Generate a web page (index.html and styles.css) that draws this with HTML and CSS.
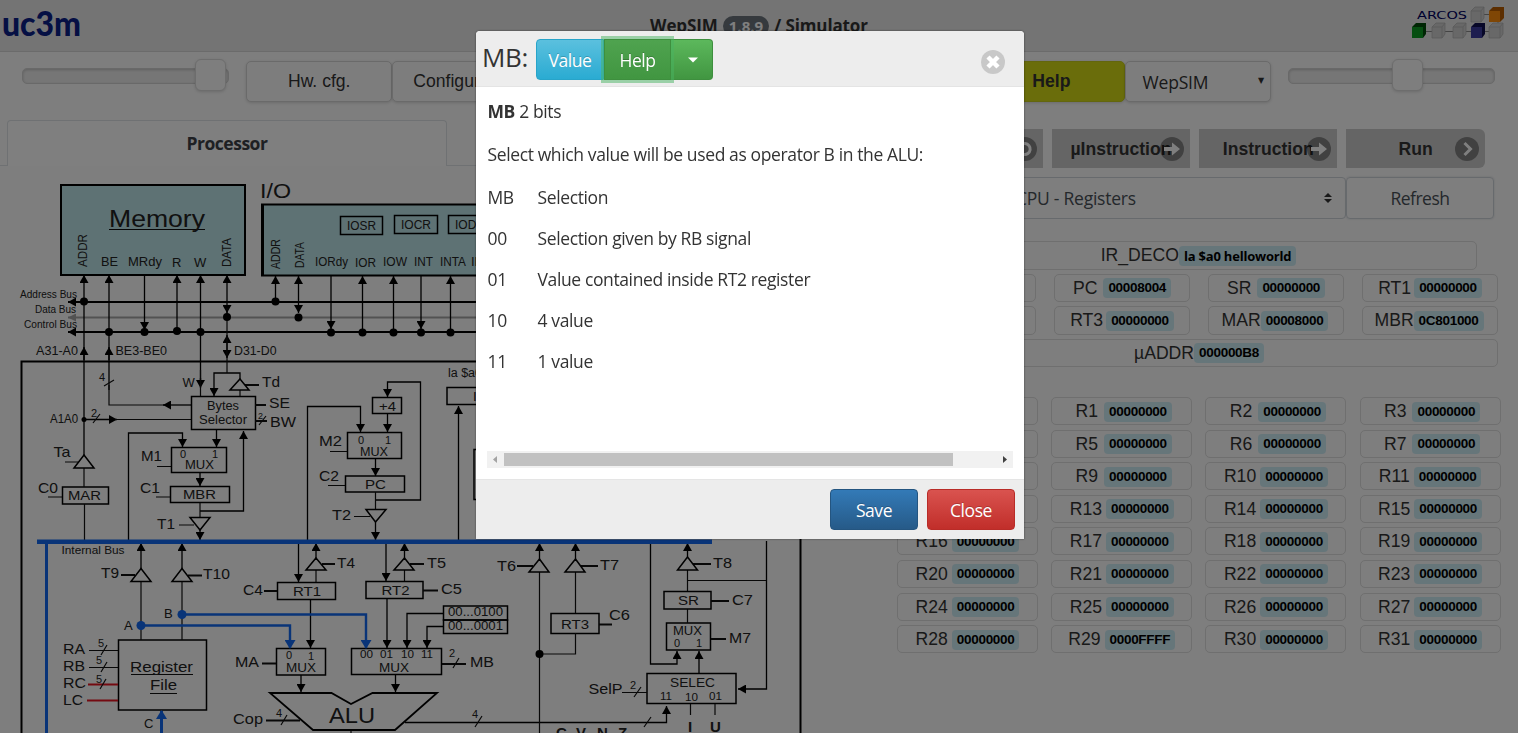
FILE: index.html
```html
<!DOCTYPE html>
<html lang="en">
<head>
<meta charset="utf-8">
<title>WepSIM</title>
<link rel="stylesheet" href="styles.css">
</head>
<body>
<header class="topbar">
  <svg class="uc3m" width="90" height="36" viewBox="0 0 90 36"><text x="2" y="26" textLength="79" lengthAdjust="spacingAndGlyphs">uc3m</text></svg>
  <div class="brand">WepSIM <span class="version">1.8.9</span> / Simulator</div>
  <svg class="arcos" width="96" height="34" viewBox="1410 6 96 34">
    <path class="link" d="M1483 14.500h8M1424 31.500h66M1498 21v5"/>
    <text x="1417" y="18.500" textLength="50" lengthAdjust="spacingAndGlyphs">ARCOS</text>
    <g fill="#d0d0d0" stroke="#b4b4b4" stroke-width=".8">
      <path d="M1471 11l4-4h9v11l-3 4h-10zM1471 11h10v11M1481 11l3-4"/>
      <path d="M1432 27l4-4h9v11l-3 4h-10zM1432 27h10v11M1442 27l3-4"/>
      <path d="M1453 27l4-4h9v11l-3 4h-10zM1453 27h10v11M1463 27l3-4"/>
      <path d="M1489 27l4-4h10v11l-3 4h-11zM1489 27h11v11M1500 27l3-4"/>
    </g>
    <path fill="#b85c00" d="M1489 11l4-4h11v11l-4 4h-11z"/><path fill="#ff8c0a" d="M1489 11h11v11h-11z"/>
    <path fill="#004c08" d="M1412 27l4-4h10v11l-3 4h-11z"/><path fill="#0c9c22" d="M1412 27h11v11h-11z"/>
    <path fill="#101050" d="M1471 27l4-4h10v11l-3 4h-11z"/><path fill="#3c3ca0" d="M1471 27h11v11h-11z"/>
  </svg>
</header>

<div class="toolbar">
  <div class="slider"><i class="knob knob-end"></i></div>
  <div class="tools">
    <button class="tool">Hw. cfg.</button>
    <button class="tool">Configuration</button>
    <button class="tool tool-help">Help</button>
    <button class="tool tool-mode">WepSIM<span>▼</span></button>
  </div>
  <div class="slider"><i class="knob knob-mid"></i></div>
</div>

<main class="work">
  <section class="left">
    <div class="tabs"><div class="tab">Processor</div></div>
    <svg class="cpu" width="880" height="567" viewBox="0 166 880 567">
      <defs>
        <marker id="a" markerUnits="userSpaceOnUse" markerWidth="8" markerHeight="9" refX="8" refY="4.500" orient="auto-start-reverse"><path d="M0 0L8 4.500L0 9z"/></marker>
        <marker id="b" markerUnits="userSpaceOnUse" markerWidth="9" markerHeight="11" refX="8" refY="5.500" orient="auto"><path class="bluefill" d="M0 0L9 5.500L0 11z"/></marker>
        <marker id="g" markerUnits="userSpaceOnUse" markerWidth="8" markerHeight="8" refX="8" refY="4" orient="auto"><path fill="#a4a4a4" d="M0 0L8 4L0 8z"/></marker>
      </defs>
      <rect class="chip" x="61" y="185" width="184" height="90"/>
      <rect class="chip" x="262" y="204.500" width="460" height="71"/>
      <path class="heavy" d="M262.500 204v72"/>
      <g class="frames">
        <rect x="340.500" y="216.500" width="42" height="18"/><rect x="394.500" y="215.500" width="43" height="18"/><rect x="448.500" y="215.500" width="43" height="18"/>
        <rect x="191.500" y="396.500" width="64" height="33"/>
        <rect x="62.500" y="487" width="46" height="17"/>
        <rect x="171.500" y="447.500" width="55" height="25"/><rect x="170.500" y="486.500" width="59" height="16"/>
        <rect x="372.500" y="397.500" width="29" height="16"/><rect x="347.500" y="432.500" width="54" height="26"/><rect x="345.500" y="476" width="59" height="16"/>
        <rect x="447" y="387.500" width="60" height="17"/><rect x="474" y="449.500" width="60" height="50"/>
        <rect x="118.500" y="640" width="88" height="70"/>
        <rect x="277.500" y="582.500" width="58" height="17"/><rect x="366" y="581.500" width="57" height="17"/>
        <rect x="443.500" y="606" width="64" height="14"/><rect x="443.500" y="620" width="64" height="13.500"/>
        <rect x="276.500" y="648.500" width="49" height="26.500"/><rect x="351.500" y="648.500" width="90" height="26"/>
        <rect x="551" y="613.500" width="48" height="20"/>
        <rect x="664" y="591.500" width="47" height="17.500"/><rect x="666.500" y="623" width="44" height="27"/><rect x="647" y="673.500" width="89" height="30"/>
      </g>
      <path class="bus" d="M800.500 733V361.500H21.500V733"/>
      <path class="bus" marker-end="url(#a)" d="M700 302H68"/>
      <path class="bus greybus" marker-end="url(#g)" d="M700 317.500H68"/>
      <path class="bus" marker-end="url(#a)" d="M700 332H68"/>
      <g class="arr">
        <path d="M84 455V275"/><path d="M84 360V347"/><path d="M109 360V347"/><path d="M109 390V275"/>
        <path d="M144.500 275V330"/><path d="M177 332V275"/><path d="M200.500 380V275"/><path d="M200.500 378V388"/>
        <path class="both" d="M227 275V313"/><path class="both" d="M227 335V358"/>
        <path d="M275.500 302V276"/><path class="both" d="M298.500 276V313"/>
        <path d="M331 276V329"/><path d="M362.500 332V276"/><path d="M393.500 332V276"/><path d="M421 276V329"/><path d="M450.500 332V276"/>
        <path d="M191 405H163"/><path d="M84 419.500H117"/>
        <path d="M240 379V373H214V396"/><path d="M128.500 541V433H182.500V447"/><path d="M216.500 430V447"/><path d="M200 473V486"/><path d="M200 530V540"/>
        <path d="M200 511H243.500V431"/>
        <path d="M375.500 500H420.500V382H387.500V397"/><path d="M387.500 414V432"/><path d="M307.500 541V406.500H360.500V432"/><path d="M375.500 459V476"/><path d="M375.500 522V540"/>
        <path d="M458.500 541V406"/>
        <path d="M141 569V543"/><path d="M182 569V543"/><path d="M316 558V543"/><path d="M404.500 558V543"/><path d="M539.500 559V543"/><path d="M575.500 559V543"/><path d="M687.500 557V543"/>
        <path d="M298.500 541V582"/><path d="M310.500 600V648"/><path d="M386 541V581"/><path d="M387 599V648"/>
        <path d="M443 613.500H407V648"/><path d="M443 626.500H427V648"/><path d="M301 675V692"/><path d="M395.500 675V692"/>
        <path d="M405 722.500H666.500V706"/><path d="M650.500 541V664H677V651"/><path d="M699 673V651"/><path d="M766.500 541V689H738"/>
      </g>
      <path class="wire" d="M109 385V405H165M115 419.500H191M200.500 370V396M227 308V373M240 390V396M84 468V487M84.500 504V541M200 503V517M375.500 492V509M65 462H78M48 497H62M157 466.500H171M156 497H170M179 525H194M330 451.500H347M328 485.500H345M354 516.500H370M141 582V640M182 582V640M316 570V582M404.500 570V581M539.500 572V733M575.500 572V613M575.500 633V654H539M687.500 570V591M687 580.500H766M687.500 609V623M690.500 704V715M715 704V715M622 692.500H647M89 650.500H118M89 667.500H118M351 730V733"/>
      <path class="wire thick" d="M245 385H259M255 405H266M255 421H267M121 575H135M188 575.500H202M264 591H277M322 564H335M410 564H424M423 590.500H438M262 663.500H276M442 664H466M266 720.500H300M517 566H533M581 566H598M599 624.500H612M693 564H711M711 601H729M711 639H726"/>
      <path class="wire" d="M104 386L114 380M93 423L100 414M259 425L266 416M101 655L107 645M101 672L107 662M453 668L459 658M281 725L287 715M475 727L482 716M644 727L651 717M634 697L641 687"/>
      <path class="gate" d="M84 455L94 468H74zM240 379L249 390H230zM190 517.500H210L200 530zM366 509.500H386L375.500 522zM141 568.500L151 581.500H131zM182 568.500L192 581.500H172zM316 558L326 570H306zM404.500 558L414 570H394zM539.500 559L549 572H529zM575.500 559L585 572H565zM687.500 557L697.500 570H677.500z"/>
      <path class="gate alu" d="M270 693H331.500L351 704L372.500 693H437L395 730H313z"/>
      <path class="redwire" d="M88 684.500H118M87 700.500H118"/><path class="wire" d="M100 689L106 679"/>
      <path class="bluebus" d="M37 541.800H712"/>
      <path class="bluewire" d="M46.500 543V733"/>
      <path class="bluewire slim" marker-end="url(#b)" d="M182 614.500H366V648"/>
      <path class="bluewire slim" marker-end="url(#b)" d="M141 625.500H290V648"/>
      <path class="bluewire" marker-end="url(#b)" d="M161.500 733V711"/>
      <circle class="bluefill" cx="182" cy="614.500" r="4.500"/><circle class="bluefill" cx="141" cy="625.500" r="4.500"/>
      <g><circle cx="84" cy="301.500" r="4"/><circle cx="109" cy="332" r="4"/><circle cx="144.500" cy="332" r="4"/><circle cx="177" cy="331" r="4"/><circle cx="200.500" cy="332" r="4"/><circle cx="227" cy="317" r="4"/><circle cx="275.500" cy="301.500" r="4"/><circle cx="298.500" cy="317.500" r="4"/><circle cx="331" cy="332.500" r="4"/><circle cx="362.500" cy="332.500" r="4"/><circle cx="393.500" cy="332.500" r="4"/><circle cx="421" cy="332.500" r="4"/><circle cx="450.500" cy="332.500" r="4"/><circle cx="84" cy="419.500" r="2.500"/><circle cx="539.500" cy="654" r="4"/></g>
      <path class="wire" d="M109 229.500H205M131 674.500H193M150 693.500H177"/>
      <g class="lbl">
        <text font-size="24" x="109" y="227" textLength="96">Memory</text><text font-size="21" x="260" y="198" textLength="31">I/O</text>
        <text font-size="12" transform="translate(87 267) rotate(-90)" textLength="33">ADDR</text><text font-size="12" transform="translate(231 267) rotate(-90)" textLength="29">DATA</text>
        <text font-size="12" transform="translate(280 269) rotate(-90)" textLength="30">ADDR</text><text font-size="12" transform="translate(304 268) rotate(-90)" textLength="26">DATA</text>
        <g font-size="13">
          <text x="101" y="266" textLength="17">BE</text><text x="128" y="266" textLength="34">MRdy</text><text x="172" y="267">R</text><text x="194" y="267">W</text>
          <text x="315" y="266" textLength="33">IORdy</text><text x="355" y="267" textLength="21">IOR</text><text x="383" y="266" textLength="24">IOW</text><text x="414" y="266" textLength="19">INT</text><text x="440" y="266" textLength="26">INTA</text><text x="471" y="266">INT</text>
          <text font-size="12" x="347" y="230" textLength="29">IOSR</text><text font-size="12" x="401" y="229" textLength="30">IOCR</text><text font-size="12" x="455" y="229" textLength="30">IODR</text>
        </g>
        <g font-size="10"><text x="20" y="298" textLength="57">Address Bus</text><text x="35" y="313" textLength="41">Data Bus</text><text x="24" y="328" textLength="53">Control Bus</text><text font-size="11" x="61.500" y="554" textLength="63">Internal Bus</text></g>
        <g font-size="12"><text x="36" y="355" textLength="42">A31-A0</text><text x="115.500" y="355" textLength="51.500">BE3-BE0</text><text x="234" y="355" textLength="42.500">D31-D0</text><text x="50" y="423" textLength="28">A1A0</text><text x="207" y="410" textLength="32">Bytes</text><text x="199" y="424" textLength="48">Selector</text><text x="448" y="377" textLength="34">la $a0</text><text x="182.500" y="387" font-size="13">W</text></g>
        <g font-size="15">
          <text x="262" y="387" textLength="18">Td</text><text x="269" y="408" textLength="21">SE</text><text x="270" y="427" textLength="26">BW</text><text x="53.500" y="457" textLength="17">Ta</text>
          <text x="38" y="493" textLength="20">C0</text><text x="141" y="461" textLength="21">M1</text><text x="140" y="493" textLength="20">C1</text><text x="157" y="529" textLength="18">T1</text>
          <text x="319" y="446" textLength="23">M2</text><text x="319" y="481" textLength="20">C2</text><text x="332" y="520" textLength="19">T2</text>
          <text x="101" y="578" textLength="18">T9</text><text x="203" y="579" textLength="27">T10</text><text x="243" y="595" textLength="20">C4</text><text x="337" y="568" textLength="18">T4</text><text x="427" y="568" textLength="19">T5</text><text x="441" y="594" textLength="21">C5</text>
          <text x="63" y="654" textLength="22">RA</text><text x="63" y="671" textLength="22">RB</text><text x="63" y="688" textLength="23">RC</text><text x="63" y="705" textLength="20">LC</text>
          <text x="235" y="667" textLength="24">MA</text><text x="470" y="667" textLength="24">MB</text><text x="233" y="724" textLength="30">Cop</text>
          <text x="497" y="571" textLength="19">T6</text><text x="600" y="570" textLength="19">T7</text><text x="609" y="620" textLength="21">C6</text><text x="713" y="568" textLength="19">T8</text><text x="732" y="605" textLength="21">C7</text><text x="729" y="643" textLength="22">M7</text><text font-size="14" x="588.500" y="694" textLength="34">SelP</text>
          <text x="130" y="672" textLength="63">Register</text><text x="150" y="690" textLength="27">File</text>
          <text font-size="13" x="164" y="618">B</text><text font-size="13" x="124" y="630">A</text><text font-size="13" x="144" y="728">C</text>
        </g>
        <g font-size="13.500">
          <text x="68" y="500" textLength="33">MAR</text><text x="183" y="499" textLength="33">MBR</text><text x="365" y="489" textLength="21">PC</text><text x="379" y="411" textLength="17">+4</text><text x="473" y="401">IR</text>
          <text x="293" y="596" textLength="28">RT1</text><text x="381.500" y="595" textLength="28">RT2</text><text x="561" y="629" textLength="28">RT3</text><text x="678" y="605" textLength="21">SR</text><text x="670" y="687" textLength="45">SELEC</text>
        </g>
        <g font-size="12">
          <text x="185" y="469" textLength="29">MUX</text><text x="360" y="456" textLength="28">MUX</text><text x="286" y="672" textLength="30">MUX</text><text x="379" y="672" textLength="30">MUX</text><text x="673" y="635" textLength="29">MUX</text>
          <text x="448" y="616" textLength="55">00...0100</text><text x="448" y="630" textLength="55">00...0001</text>
        </g>
        <g font-size="11">
          <text x="180" y="458">0</text><text x="212" y="458">1</text><text x="358" y="444">0</text><text x="385" y="444">1</text><text x="286" y="659">0</text><text x="308" y="660">1</text>
          <text x="360" y="658" textLength="13">00</text><text x="380" y="658" textLength="13">01</text><text x="401" y="658" textLength="13">10</text><text x="421" y="658" textLength="12">11</text>
          <text x="674" y="647">0</text><text x="696" y="647">1</text><text x="660" y="700" textLength="12">11</text><text x="685" y="701" textLength="13">10</text><text x="709" y="700" textLength="13">01</text>
          <text x="99" y="381">4</text><text x="91" y="417">2</text><text x="258" y="419" font-size="9">2</text><text x="98" y="647">5</text><text x="96" y="664">5</text><text x="96" y="683">5</text><text x="449" y="657">2</text><text x="276" y="717">4</text><text x="472" y="718">4</text><text x="630" y="689">2</text>
        </g>
        <text font-size="22" x="329" y="723" textLength="46">ALU</text>
        <g font-size="15" font-weight="bold"><text x="688" y="732">I</text><text x="710" y="732">U</text><text x="556" y="738">C</text><text x="576" y="738">V</text><text x="597" y="738">N</text><text x="618" y="738">Z</text></g>
      </g>
    </svg>
  </section>

  <section class="right">
    <div class="steps">
      <button class="step"><span>Reset</span><svg viewBox="0 0 24 24"><circle cx="12" cy="12" r="12"/><path d="M8 8a5.500 5.500 0 1 1-1 7"/></svg></button>
      <button class="step"><span>µInstruction</span><svg viewBox="0 0 24 24"><circle cx="12" cy="12" r="12"/><path class="solid" d="M4 10h8V5.500l8 6.500-8 6.500V14H4z"/></svg></button>
      <button class="step"><span>Instruction</span><svg viewBox="0 0 24 24"><circle cx="12" cy="12" r="12"/><path class="solid" d="M4 10h8V5.500l8 6.500-8 6.500V14H4z"/></svg></button>
      <button class="step"><span>Run</span><svg viewBox="0 0 24 24"><circle cx="12" cy="12" r="12"/><path d="M9.500 6l6 6-6 6"/></svg></button>
    </div>
    <div class="viewbar">
      <div class="view">CPU - Registers<svg width="8" height="10" viewBox="0 0 8 10"><path d="M0 4L4 0L8 4zM0 6h8L4 10z"/></svg></div>
      <div class="refresh">Refresh</div>
    </div>
    <div class="special">
      <div class="reg deco">IR_DECO<b>la $a0 helloworld</b></div>
      <div class="reg">IR<b>00000000</b></div><div class="reg gap">PC<b>00008004</b></div><div class="reg gap">SR<b>00000000</b></div><div class="reg">RT1<b>00000000</b></div>
      <div class="reg">RT2<b>00000000</b></div><div class="reg">RT3<b>00000000</b></div><div class="reg tight">MAR<b>00008000</b></div><div class="reg tight">MBR<b>0C801000</b></div>
      <div class="reg wide">µADDR<b>000000B8</b></div>
    </div>
    <div class="regs">
      <div class="reg one">R0<b>00000000</b></div><div class="reg one">R1<b>00000000</b></div><div class="reg one">R2<b>00000000</b></div><div class="reg one">R3<b>00000000</b></div>
      <div class="reg one">R4<b>00000000</b></div><div class="reg one">R5<b>00000000</b></div><div class="reg one">R6<b>00000000</b></div><div class="reg one">R7<b>00000000</b></div>
      <div class="reg one">R8<b>00000000</b></div><div class="reg one">R9<b>00000000</b></div><div class="reg two">R10<b>00000000</b></div><div class="reg two">R11<b>00000000</b></div>
      <div class="reg two">R12<b>00000000</b></div><div class="reg two">R13<b>00000000</b></div><div class="reg two">R14<b>00000000</b></div><div class="reg two">R15<b>00000000</b></div>
      <div class="reg two">R16<b>00000000</b></div><div class="reg two">R17<b>00000000</b></div><div class="reg two">R18<b>00000000</b></div><div class="reg two">R19<b>00000000</b></div>
      <div class="reg two">R20<b>00000000</b></div><div class="reg two">R21<b>00000000</b></div><div class="reg two">R22<b>00000000</b></div><div class="reg two">R23<b>00000000</b></div>
      <div class="reg two">R24<b>00000000</b></div><div class="reg two">R25<b>00000000</b></div><div class="reg two">R26<b>00000000</b></div><div class="reg two">R27<b>00000000</b></div>
      <div class="reg two">R28<b>00000000</b></div><div class="reg two">R29<b>0000FFFF</b></div><div class="reg two">R30<b>00000000</b></div><div class="reg two">R31<b>00000000</b></div>
    </div>
  </section>
</main>

<div class="backdrop"></div>
<div class="modal">
  <div class="modal-head">
    <h4>MB:</h4>
    <div class="group">
      <button class="btn info">Value</button><button class="btn success active">Help</button><button class="btn success drop"><svg width="10" height="6" viewBox="0 0 10 6"><path d="M0 .500h10L5 5.500z"/></svg></button>
    </div>
    <svg class="dismiss" width="24" height="24" viewBox="0 0 24 24"><circle cx="12" cy="12" r="12"/><path d="M7 7l10 10M17 7L7 17"/></svg>
  </div>
  <div class="modal-body">
    <p><strong>MB</strong> 2 bits</p>
    <p class="desc">Select which value will be used as operator B in the ALU:</p>
    <div class="opts">
      <span>MB</span><span>Selection</span>
      <span>00</span><span>Selection given by RB signal</span>
      <span>01</span><span>Value contained inside RT2 register</span>
      <span>10</span><span>4 value</span>
      <span>11</span><span>1 value</span>
    </div>
    <div class="scroll"><svg width="17" height="17" viewBox="0 0 17 17"><path fill="#a3a3a3" d="M10 5v7L6 8.500z"/></svg><i></i><svg width="17" height="17" viewBox="0 0 17 17"><path fill="#404040" d="M7 5v7l4-3.500z"/></svg></div>
  </div>
  <div class="modal-foot"><button class="btn primary">Save</button><button class="btn danger">Close</button></div>
</div>
<script src="script.js"></script>
</body>
</html>
```
FILE: script.js
```js
// Diagram labels stretch their letters, not the gaps between them.
document.querySelectorAll('.cpu text[textLength]').forEach(function (label) {
  label.setAttribute('lengthAdjust', 'spacingAndGlyphs');
});
```
FILE: styles.css
```css
* { box-sizing: border-box; }
body { margin: 0; width: 1518px; height: 733px; overflow: hidden; background: #fcfcfc; color: #333; font: 17.5px "Open Sans", "Noto Sans", sans-serif; }
button { font: inherit; margin: 0; padding: 0; }

.topbar { height: 52px; display: flex; justify-content: space-between; align-items: flex-start; background: #e9e9e9; border-bottom: 1px solid #d6d6d6; padding: 6px 12px 0 0; }
.uc3m { margin-top: 4px; }
.uc3m text { font: 900 34px Lato, sans-serif; fill: #0b2088; }
.brand { font-weight: 700; font-size: 17px; letter-spacing: -.12px; padding: 8px 0 0 18px; line-height: 24px; }
.version { display: inline-block; background: #6c757d; color: #fff; border-radius: 10px; font-size: 15px; line-height: 20px; width: 46px; text-align: center; letter-spacing: 0; margin: 0 1px; }
.arcos text { font: 11px "DejaVu Sans", sans-serif; fill: #000060; }
.arcos .link { stroke: #888; stroke-width: 1; fill: none; }

.toolbar { height: 68px; display: flex; padding: 9px 22px 0; gap: 17px; }
.slider { width: 207px; height: 16px; margin-top: 7px; border: 1px solid #d2d2d2; border-radius: 5px; background: #ededed; box-shadow: inset 0 1px 3px rgba(0,0,0,.2); display: flex; flex: none; }
.knob { width: 31px; height: 32px; flex: none; margin-top: -10px; background: #fcfcfc; border: 1px solid #dadada; border-radius: 6px; box-shadow: 0 1px 3px rgba(0,0,0,.15); }
.knob-end { margin-left: 172px; }
.knob-mid { margin-left: 103px; }
.tools { width: 1025px; flex: none; display: grid; grid-template-columns: repeat(7, 1fr); }
.tool { height: 41px; background: #fbfbfb; border: 1px solid #d4d4d4; border-radius: 5px; box-shadow: 0 1px 3px rgba(0,0,0,.15); color: #333; font: 17.6px "Liberation Sans", Arial, sans-serif; }
.tool-help { grid-column: 6; background: #d4db17; border-color: #c6cc1c; font-weight: 700; }
.tool-mode { display: flex; justify-content: space-between; align-items: center; padding: 0 6px 0 17px; font: 17.5px "Open Sans", sans-serif; letter-spacing: -.2px; }
.tool-mode span { font: 8px "DejaVu Sans", sans-serif; padding-bottom: 3px; }

.work { display: flex; height: 613px; }
.left { width: 880px; }
.tabs { height: 46px; padding-left: 7px; border-bottom: 1px solid #dee2e6; }
.tab { width: 440px; height: 46px; background: #fff; border: 1px solid #dee2e6; border-bottom: 0; border-radius: 4px 4px 0 0; text-align: center; font-weight: 700; line-height: 45px; letter-spacing: -.5px; color: #3c4147; }
.cpu { display: block; }

.cpu text { font-family: "Liberation Sans", Arial, sans-serif; }
.lbl { fill: #222; }
.chip { fill: #bde4e8; stroke: #000; stroke-width: 2; }
.heavy { stroke: #000; stroke-width: 3; }
.frames { fill: none; stroke: #000; stroke-width: 1.5; }
.bus { fill: none; stroke: #000; stroke-width: 2; }
.greybus { stroke: #a4a4a4; }
.arr path { fill: none; stroke: #000; stroke-width: 1.3; marker-end: url(#a); }
.arr .both { marker-start: url(#a); }
.wire { fill: none; stroke: #111; stroke-width: 1.2; }
.thick { stroke-width: 1.9; }
.gate { fill: #fcfcfc; stroke: #000; stroke-width: 1.5; }
.alu { stroke-width: 1.8; }
.redwire { stroke: #e81422; stroke-width: 2; }
.bluebus { stroke: #1268f0; stroke-width: 4.4; }
.bluewire { fill: none; stroke: #1268f0; stroke-width: 3; }
.slim { stroke-width: 2.4; }
.bluefill { fill: #1268f0; }

.right { width: 638px; padding: 9px 18px 0 17px; }
.steps { display: flex; gap: 9px; padding-left: 7.500px; }
.step { width: 138.300px; height: 39px; display: grid; place-items: center; background: #cbcbcb; border: 0; font: 700 17.6px "Liberation Sans", Arial, sans-serif; color: #333; }
.step:last-child { border-radius: 0 6px 6px 0; }
.step span { grid-area: 1 / 1; padding-top: 1px; }
.step svg { grid-area: 1 / 1; justify-self: end; width: 24px; height: 24px; margin-right: 6px; fill: none; }
.step circle { fill: rgba(0,0,0,.36); }
.step path { stroke: #fff; stroke-width: 3; }
.step .solid { fill: #fff; stroke: none; }
.viewbar { display: flex; margin-top: 9px; height: 42px; }
.view, .refresh { border: 1px solid #ced4da; border-radius: 4px; line-height: 42px; color: #495057; letter-spacing: -.25px; }
.view { width: 449px; display: flex; justify-content: space-between; align-items: center; padding: 0 13px 0 118px; }
.view svg { fill: #333; }
.refresh { width: 148px; text-align: center; line-height: 41px; letter-spacing: -.5px; box-shadow: 0 0 2px #ced4da; }

.special { display: grid; grid-template-columns: repeat(4, 136px); column-gap: 18px; row-gap: 4px; padding-left: 3px; margin-top: 22px; }
.reg { height: 28px; display: flex; align-items: center; justify-content: center; gap: 3px; border: 1px solid #dedede; border-radius: 5px; font: 17.6px "Liberation Sans", Arial, sans-serif; color: #333; white-space: nowrap; padding-top: 1px; }
.reg b { background: #cdecf5; border-radius: 4px; font-size: 13.500px; letter-spacing: -.3px; line-height: 20px; padding: 0 5px; color: #000; }
.special .reg { height: 28.500px; }
.special .tight { gap: 0; padding-right: 2px; }
.deco { grid-column: 1 / -1; margin: 0 21px 0 20px; }
.special .deco b { font: 700 13px/20px "Open Sans", sans-serif; letter-spacing: -.2px; }
.wide { grid-column: 1 / -1; }
.special .wide, .special .deco { gap: 0; }
.special .gap { gap: 6px; }
.regs { display: grid; grid-template-columns: repeat(4, 141px); column-gap: 13.200px; row-gap: 4.600px; margin-top: 30px; }
.one { gap: 6px; padding-left: 4px; }
.two { gap: 4px; }

.backdrop { position: fixed; inset: 0; background: rgba(0,0,0,.5); }
.modal { position: absolute; left: 476px; top: 31px; width: 548px; height: 508px; background: #fff; border-radius: 4px 4px 0 0; display: flex; flex-direction: column; box-shadow: 0 0 2px rgba(0,0,0,.6); overflow: hidden; }
.modal-head { height: 56px; background: #ededed; border-bottom: 1px solid #e4e4e4; display: flex; align-items: flex-start; padding: 8px 19px 0 6px; }
.modal-head h4 { font-size: 26px; font-weight: 400; margin: 0 7px 0 0; width: 47px; line-height: 36px; letter-spacing: -.4px; white-space: nowrap; }
.group { display: flex; flex: 1; }
.btn { height: 41px; color: #fff; border: 1px solid; border-radius: 4px; font-size: 17.5px; letter-spacing: -.45px; text-shadow: 0 -1px 0 rgba(0,0,0,.2); }
.info { width: 68px; background: linear-gradient(#5bc0de, #2aabd2); border-color: #28a4c9; border-radius: 4px 0 0 4px; }
.success { background: linear-gradient(#5cb85c, #419641); border-color: #3e8f3e; }
.active { width: 67px; background: linear-gradient(#4fa34f, #419641); border-radius: 0; box-shadow: 0 0 0 3px rgba(72,180,97,.5); z-index: 1; }
.drop { width: 42px; border-radius: 0 4px 4px 0; border-left: 0; display: grid; place-items: center; padding-left: 2px; }
.drop svg, .dismiss path { fill: #fff; }
.dismiss { margin-top: 11px; }
.dismiss circle { fill: #c8c8c8; }
.dismiss path { stroke: #fff; stroke-width: 4.500; }
.modal-body { height: 392px; padding: 11px 11px 0 11.500px; display: flex; flex-direction: column; color: #333; letter-spacing: -.38px; line-height: 27px; }
.modal-body p { margin: 0 0 16px; }
.opts { display: grid; grid-template-columns: 50px 1fr; row-gap: 14px; }
.scroll { display: flex; width: 526px; height: 17px; margin: 76px 0 0 -.5px; background: #f1f1f1; }
.scroll i { width: 449px; height: 13px; margin: 2px 43px 2px 0; background: #c1c1c1; }
.modal-foot { height: 60px; background: #ededed; border-top: 1px solid #e5e5e5; display: flex; justify-content: flex-end; gap: 9px; padding: 9px 9px 0 0; }
.modal-foot .btn { width: 88px; }
.primary { background: linear-gradient(#337ab7, #265a88); border-color: #245580; }
.danger { background: linear-gradient(#d9534f, #c12e2a); border-color: #b92c28; }
```
